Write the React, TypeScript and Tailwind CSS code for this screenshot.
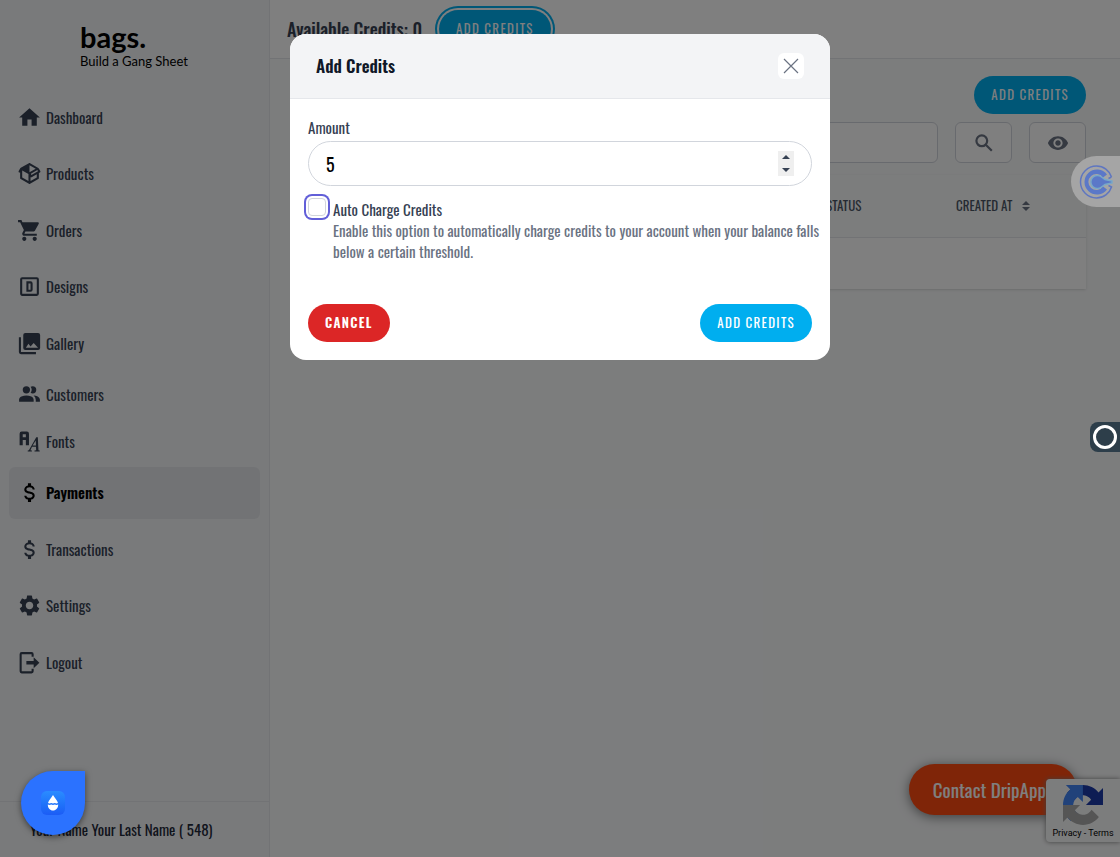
import { useState, type ReactNode } from "react";
import clsx from "clsx";
import { MdHome, MdSettings, MdShoppingCart, MdVisibility } from "react-icons/md";

interface NavItem {
  name: string;
  icon: ReactNode;
  compact?: boolean;
  active?: boolean;
}

function PathIcon({ d }: { d: string }) {
  return (
    <svg viewBox="0 0 24 24" fill="currentColor" className="size-[25px]" aria-hidden="true">
      <path d={d} />
    </svg>
  );
}

const packagePath =
  "M2,10.96C1.5,10.68 1.35,10.07 1.63,9.59L3.13,7C3.24,6.8 3.41,6.66 3.6,6.58L11.43,2.18C11.59,2.06 11.79,2 12,2C12.21,2 12.41,2.06 12.57,2.18L20.47,6.62C20.66,6.72 20.82,6.88 20.91,7.08L22.36,9.6C22.64,10.08 22.47,10.69 22,10.96L21,11.54V16.5C21,16.88 20.79,17.21 20.47,17.38L12.57,21.82C12.41,21.94 12.21,22 12,22C11.79,22 11.59,21.94 11.43,21.82L3.53,17.38C3.21,17.21 3,16.88 3,16.5V10.96C2.7,11.13 2.32,11.14 2,10.96M12,4.15V4.15L12,10.85V10.85L17.96,7.5L12,4.15M5,15.91L11,19.29V12.58L5,9.21V15.91M19,15.91V12.69L14,15.59C13.67,15.77 13.3,15.76 13,15.6V19.29L19,15.91M13.85,13.36L20.13,9.73L19.55,8.72L13.27,12.35L13.85,13.36Z";
const designPath =
  "M3,5A2,2 0 0,1 5,3H19A2,2 0 0,1 21,5V19A2,2 0 0,1 19,21H5C3.89,21 3,20.1 3,19V5M5,5V19H19V5H5M9,7H13A2,2 0 0,1 15,9V15A2,2 0 0,1 13,17H9V7M11,9V15H13V9H11Z";
const galleryPath =
  "M22.2,16.200V3.800A2,2 0 0,0 20.200,1.800H8A2,2 0 0,0 6,3.800V16.200A2,2 0 0,0 8,18.200H20.200A2,2 0 0,0 22.200,16.200M8.500,16L11,12.200L13,14.800L16,11.500L20.200,16H8.500M1.800,6V20.200A2,2 0 0,0 3.800,22.200H18.200V20.200H3.800V6Z";
const customersPath =
  "M16 17V19H2V17S2 13 9 13 16 17 16 17M12.5 7.5A3.5 3.5 0 1 0 9 11A3.5 3.5 0 0 0 12.5 7.5M15.94 13A5.32 5.32 0 0 1 18 17V19H22V17S22 13.37 15.94 13M15 4A3.39 3.39 0 0 0 13.07 4.59A5 5 0 0 1 13.07 10.41A3.39 3.39 0 0 0 15 11A3.5 3.5 0 0 0 15 4Z";
const fontsPath =
  "M4.500,2.500H9.500A2,2 0 0,1 11.500,4.500V15.500H8.500V10.500H5.500V15.500H2.500V4.500A2,2 0 0,1 4.500,2.500M5.500,5V8H8.500V5H5.500M18.500,8H20L20.600,20.300L21.800,20.700V21.500H16.800V20.700L18.400,20.300L18.200,17H14.400L12.900,20.300L14.300,20.700V21.500H10.300V20.700L11.400,20.300L18.500,8M18,11L15,15.800H18.200L18,11Z";
const dollarPath =
  "M7,15H9C9,16.08 10.37,17 12,17C13.63,17 15,16.08 15,15C15,13.9 13.96,13.5 11.76,12.97C9.64,12.44 7,11.78 7,9C7,7.21 8.47,5.69 10.5,5.18V3H13.5V5.18C15.53,5.69 17,7.21 17,9H15C15,7.92 13.63,7 12,7C10.37,7 9,7.92 9,9C9,10.1 10.04,10.5 12.24,11.03C14.36,11.56 17,12.22 17,15C17,16.79 15.53,18.31 13.5,18.82V21H10.5V18.82C8.47,18.31 7,16.79 7,15Z";
const logoutPath =
  "M4.500,2H14A2,2 0 0,1 16,4V6.500H14V4H4.500V20.500H14V18H16V20.500A2,2 0 0,1 14,22.500H4.500A2,2 0 0,1 2.500,20.500V4A2,2 0 0,1 4.500,2M9,10.500H16V7L21.500,12.200L16,17.400V14H9V10.500Z";

const navItems: NavItem[] = [
  { name: "Dashboard", icon: <MdHome className="size-[25px]" /> },
  { name: "Products", icon: <PathIcon d={packagePath} /> },
  { name: "Orders", icon: <MdShoppingCart className="size-[25px]" /> },
  { name: "Designs", icon: <PathIcon d={designPath} /> },
  { name: "Gallery", icon: <PathIcon d={galleryPath} /> },
  { name: "Customers", icon: <PathIcon d={customersPath} />, compact: true },
  { name: "Fonts", icon: <PathIcon d={fontsPath} />, compact: true },
  { name: "Payments", icon: <PathIcon d={dollarPath} />, active: true },
  { name: "Transactions", icon: <PathIcon d={dollarPath} /> },
  { name: "Settings", icon: <MdSettings className="size-[25px]" /> },
  { name: "Logout", icon: <PathIcon d={logoutPath} /> },
];

function PillButton({ children, className }: { children: ReactNode; className?: string }) {
  return (
    <button
      type="button"
      className={clsx(
        "h-[38px] rounded-full px-[17px] text-[13px] tracking-widest text-white uppercase",
        className,
      )}
    >
      {children}
    </button>
  );
}

function Sidebar() {
  return (
    <aside className="flex w-[270px] shrink-0 flex-col border-r border-gray-200 bg-gray-100">
      <div className="px-20 pt-5 pb-[22px] font-['Lato',sans-serif] text-black">
        <div className="text-[29px] leading-[33px] font-bold">bags.</div>
        <div className="text-[13px] leading-4 whitespace-nowrap">Build a Gang Sheet</div>
      </div>
      <nav className="flex max-h-[597px] flex-1 flex-col justify-between px-[9px]">
        {navItems.map((item) => (
          <a
            key={item.name}
            href="#"
            className={clsx(
              "flex items-center gap-1 rounded-md px-2 text-[15px]",
              item.compact ? "h-[42px]" : "h-[52px]",
              item.active ? "bg-gray-200 font-semibold text-black" : "text-gray-700",
            )}
          >
            {item.icon}
            {item.name}
          </a>
        ))}
      </nav>
      <div className="mt-auto flex h-14 items-center border-t border-gray-200 px-[30px] text-[15px] text-gray-800">
        Your Name Your Last Name ( 548)
      </div>
    </aside>
  );
}

function CreditsPage() {
  return (
    <div className="flex min-w-0 flex-1 flex-col bg-gray-50">
      <header className="flex h-[59px] items-center gap-[17px] border-b border-gray-200 bg-white px-[17px]">
        <span className="text-lg font-medium text-gray-700">Available Credits: 0</span>
        <PillButton className="bg-[#00aeef] ring-2 ring-[#00aeef] ring-offset-2">
          Add Credits
        </PillButton>
      </header>
      <main className="flex flex-col px-[34px] pt-[17px]">
        <PillButton className="self-end bg-[#00aeef]">Add Credits</PillButton>
        <div className="mt-2 flex gap-[17px]">
          <input
            type="search"
            aria-label="Search credits"
            className="h-[41px] min-w-0 flex-1 rounded-md border border-gray-300 bg-white px-4"
          />
          <button
            type="button"
            aria-label="Search"
            className="flex w-[57px] items-center justify-center rounded-md border border-gray-300 bg-white text-gray-500"
          >
            <svg
              viewBox="0 0 18 18"
              className="size-[18px]"
              fill="none"
              stroke="currentColor"
              strokeWidth="2.2"
              aria-hidden="true"
            >
              <circle cx="6.8" cy="6.8" r="5.4" />
              <path d="M10.800 10.800 16.800 16.800" />
            </svg>
          </button>
          <button
            type="button"
            aria-label="Columns"
            className="flex w-[57px] items-center justify-center rounded-md border border-gray-300 bg-white text-gray-500"
          >
            <MdVisibility className="size-[22px]" />
          </button>
        </div>
        <table className="mt-3 w-full table-fixed bg-white text-left text-[13px] text-gray-600 uppercase shadow">
          <thead className="border-b border-gray-200 bg-gray-50">
            <tr className="h-[62px]">
              <th className="pl-5 font-normal">ID</th>
              <th className="font-normal">Amount</th>
              <th className="font-normal">Type</th>
              <th className="w-[130px] font-normal">Status</th>
              <th className="w-[130px] font-normal">
                <span className="flex items-center gap-[10px]">
                  Created at
                  <svg
                    viewBox="0 0 8 10"
                    className="h-[10px] w-2 text-gray-500"
                    fill="currentColor"
                    aria-hidden="true"
                  >
                    <path d="M4 0 8 4H0ZM4 10 8 6H0Z" />
                  </svg>
                </span>
              </th>
            </tr>
          </thead>
          <tbody>
            <tr className="h-[52px]">
              <td colSpan={5} />
            </tr>
          </tbody>
        </table>
      </main>
    </div>
  );
}

function AddCreditsDialog() {
  const [amount, setAmount] = useState(5);
  const [autoCharge, setAutoCharge] = useState(false);

  return (
    <div
      role="dialog"
      aria-modal="true"
      aria-labelledby="dialog-title"
      className="w-full max-w-[540px] overflow-hidden rounded-2xl bg-white"
    >
      <div className="flex h-[65px] items-center justify-between border-b border-gray-200 bg-gray-100 px-[26px]">
        <h2 id="dialog-title" className="text-[17px] font-semibold text-gray-900">
          Add Credits
        </h2>
        <button
          type="button"
          aria-label="Close"
          className="flex size-[26px] items-center justify-center rounded-md bg-white text-gray-500"
        >
          <svg viewBox="0 0 16 16" className="size-4" stroke="currentColor" strokeWidth="1.2" aria-hidden="true">
            <path d="M1 1 15 15M15 1 1 15" />
          </svg>
        </button>
      </div>
      <form className="p-[18px]">
        <label htmlFor="amount" className="block text-[15px] leading-5 text-gray-700">
          Amount
        </label>
        <div className="relative mt-1">
          <input
            id="amount"
            type="number"
            value={amount}
            onChange={(e) => setAmount(Number(e.target.value))}
            className="h-[45px] w-full [appearance:textfield] rounded-full border border-gray-300 px-[17px] text-lg text-black"
          />
          <div className="absolute inset-y-0 right-[18px] my-auto flex h-[25px] w-4 flex-col bg-[#efefef] text-gray-700">
            <button
              type="button"
              aria-label="Increase amount"
              onClick={() => setAmount(amount + 1)}
              className="flex flex-1 items-center justify-center"
            >
              <svg viewBox="0 0 8 4" className="h-1 w-2" fill="currentColor" aria-hidden="true">
                <path d="M4 0 8 4H0Z" />
              </svg>
            </button>
            <button
              type="button"
              aria-label="Decrease amount"
              onClick={() => setAmount(amount - 1)}
              className="flex flex-1 items-center justify-center"
            >
              <svg viewBox="0 0 8 4" className="h-1 w-2" fill="currentColor" aria-hidden="true">
                <path d="M4 4 8 0H0Z" />
              </svg>
            </button>
          </div>
        </div>
        <div className="mt-3 flex gap-[7px]">
          <input
            id="auto-charge"
            type="checkbox"
            checked={autoCharge}
            onChange={(e) => setAutoCharge(e.target.checked)}
            className="size-[18px] shrink-0 appearance-none rounded border border-gray-300 bg-white ring-2 ring-[#625fd8] ring-offset-2"
          />
          <div className="-mr-3 pt-px text-[15px] leading-[21px] text-gray-500">
            <label htmlFor="auto-charge" className="block text-gray-700">
              Auto Charge Credits
            </label>
            <p>
              Enable this option to automatically charge credits to your account when your balance
              falls below a certain threshold.
            </p>
          </div>
        </div>
        <div className="mt-[42px] flex justify-between">
          <PillButton className="bg-[#dc2626] font-semibold">Cancel</PillButton>
          <PillButton className="bg-[#00aeef]">Add Credits</PillButton>
        </div>
      </form>
    </div>
  );
}

function RecaptchaBadge() {
  return (
    <div className="absolute right-0 bottom-[15px] flex h-[63px] w-[74px] flex-col items-center rounded-l-sm bg-gray-50 pt-[6px] shadow-[0_0_5px_gray]">
      <svg viewBox="0 0 64 64" className="size-10" aria-hidden="true">
        <path
          fill="#1c3aa9"
          d="M64 31.955l-.033-1.37V4.687l-7.16 7.16C50.948 4.674 42.033.093 32.05.093c-10.4 0-19.622 4.96-25.458 12.64l11.736 11.86a15.55 15.55 0 0 1 4.754-5.334c2.05-1.6 4.952-2.906 8.968-2.906.485 0 .86.057 1.135.163 4.976.393 9.288 3.14 11.828 7.124l-8.307 8.307L64 31.953"
        />
        <path
          fill="#4285f4"
          d="M31.862.094l-1.37.033H4.594l7.16 7.16C4.58 13.147 0 22.06 0 32.046c0 10.4 4.96 19.622 12.64 25.458L24.5 45.768a15.55 15.55 0 0 1-5.334-4.754c-1.6-2.05-2.906-4.952-2.906-8.968 0-.485.057-.86.163-1.135.393-4.976 3.14-9.288 7.124-11.828l8.307 8.307L31.86.095"
        />
        <path
          fill="#ababab"
          d="M.001 32.045l.033 1.37v25.898l7.16-7.16c5.86 7.173 14.774 11.754 24.76 11.754 10.4 0 19.622-4.96 25.458-12.64l-11.736-11.86a15.55 15.55 0 0 1-4.754 5.334c-2.05 1.6-4.952 2.906-8.968 2.906-.485 0-.86-.057-1.135-.163-4.976-.393-9.288-3.14-11.828-7.124l8.307-8.307L0 32.047"
        />
      </svg>
      <div className="mt-[2px] font-['Roboto',sans-serif] text-[9px] leading-3 whitespace-nowrap text-black">
        <a href="#">Privacy</a> - <a href="#">Terms</a>
      </div>
    </div>
  );
}

export default function App() {
  return (
    <div className="relative flex min-h-screen overflow-hidden font-['Oswald',sans-serif]">
      <Sidebar />
      <CreditsPage />

      <button
        type="button"
        className="absolute right-[43px] bottom-[42px] h-[51px] rounded-full bg-[#ff4a10] px-6 text-[19px] text-white shadow-[0_2px_12px_rgba(0,0,0,0.5)]"
      >
        Contact DripApps
      </button>
      <RecaptchaBadge />

      <div className="absolute inset-0 flex items-start justify-center bg-black/50 pt-[34px]">
        <AddCreditsDialog />
      </div>

      {/* Floating widgets */}
      <button
        type="button"
        aria-label="Open scheduler"
        className="absolute top-[156px] right-0 flex h-[51px] w-[49px] items-center rounded-l-full bg-[#a5a5a5] pl-2"
      >
        <svg viewBox="0 0 34 34" className="size-[34px]" fill="none" aria-hidden="true">
          <path
            d="M32.500 12C30.500 5.500 24.500 1 17.500 1A16 16 0 0 0 17.500 33C24.500 33 30.500 28.500 32.500 22L29.500 20.500M32.500 12 29.500 13.500"
            stroke="#5f76c0"
            strokeWidth="1.5"
          />
          <path d="M28 9.500A12.500 12.500 0 1 0 28 24.500L24 21.500A8 8 0 1 1 24 12.500Z" fill="#5b78c8" />
          <path
            d="M33 16 26 14.500 22.500 12A6.500 6.500 0 1 0 22.500 22L26 19.500 33 18Z"
            fill="#5b78c8"
            stroke="#78a8c8"
            strokeWidth="1.500"
          />
        </svg>
      </button>
      <button
        type="button"
        aria-label="Open recorder"
        className="absolute top-[422px] right-0 flex h-[30px] w-[30px] items-center justify-center rounded-l-lg bg-[#2d3e4a]"
      >
        <span className="size-6 rounded-full border-3 border-white" />
      </button>
      <button
        type="button"
        aria-label="Open chat"
        className="absolute bottom-[22px] left-[21px] flex size-16 items-center justify-center rounded-full rounded-tr-lg bg-[#2b72ff] shadow-[0_2px_6px_rgba(0,0,0,0.5)]"
      >
        <span className="flex size-6 items-center justify-center rounded-md bg-linear-to-b from-[#2b8cff] to-[#1c5cf5]">
          <svg viewBox="0 0 12 16" className="h-4 w-3" fill="#fff" aria-hidden="true">
            <path d="M6 0C8 3 10.2 5.400 11 8L9.500 8.600 7.700 8 6 8.600 4.300 8 2.500 8.600 1 8C1.800 5.400 4 3 6 0Z" />
            <path d="M.8 9.500 2.500 10 4.300 9.400 6 10 7.700 9.400 9.500 10 11.200 9.500C11.200 13 9 15.500 6 15.500S.8 13 .8 9.500Z" />
          </svg>
        </span>
      </button>
    </div>
  );
}
